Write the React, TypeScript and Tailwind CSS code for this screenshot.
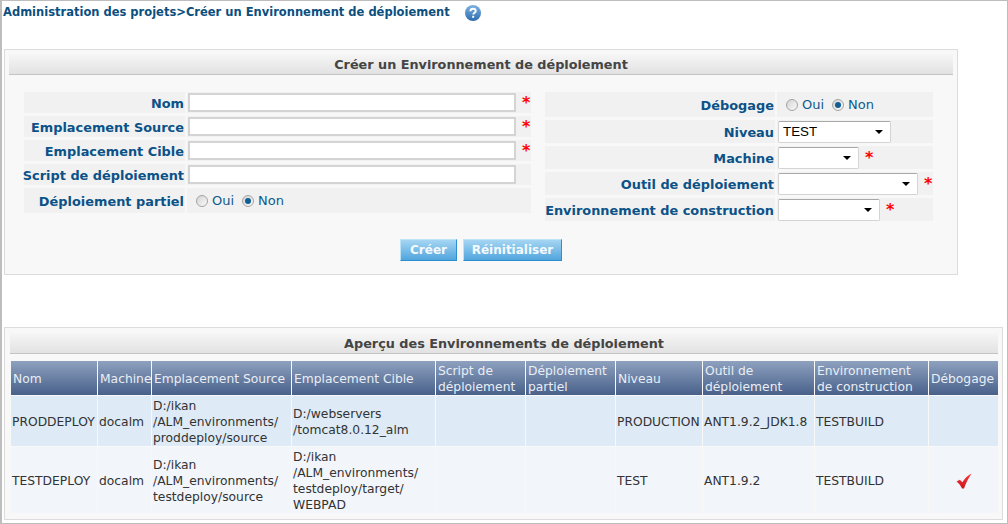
const leftRows = [
  { label: "Nom", required: true },
  { label: "Emplacement Source", required: true },
  { label: "Emplacement Cible", required: true },
  { label: "Script de déploiement", required: false },
];

const rightRows = [
  { label: "Niveau", value: "TEST", width: "w-[113px]", required: false },
  { label: "Machine", value: "", width: "w-[81px]", required: true },
  { label: "Outil de déploiement", value: "", width: "w-[140px]", required: true },
  { label: "Environnement de construction", value: "", width: "w-[102px]", required: true },
];

const columns = [
  { title: ["Nom"], width: "w-[86px]" },
  { title: ["Machine"], width: "w-[53px]" },
  { title: ["Emplacement Source"], width: "w-[139px]" },
  { title: ["Emplacement Cible"], width: "w-[143px]" },
  { title: ["Script de", "déploiement"], width: "w-[89px]" },
  { title: ["Déploiement", "partiel"], width: "w-[89px]" },
  { title: ["Niveau"], width: "w-[86px]" },
  { title: ["Outil de", "déploiement"], width: "w-[111px]" },
  { title: ["Environnement", "de construction"], width: "w-[113px]" },
  { title: ["Débogage"], width: "w-[69px]" },
];

const rows = [
  {
    cells: [
      ["PRODDEPLOY"],
      ["docalm"],
      ["D:/ikan", "/ALM_environments/", "proddeploy/source"],
      ["D:/webservers", "/tomcat8.0.12_alm"],
      [],
      [],
      ["PRODUCTION"],
      ["ANT1.9.2_JDK1.8"],
      ["TESTBUILD"],
      [],
    ],
    bg: "bg-[#deebf6]",
    height: "h-[50px]",
    debug: false,
  },
  {
    cells: [
      ["TESTDEPLOY"],
      ["docalm"],
      ["D:/ikan", "/ALM_environments/", "testdeploy/source"],
      ["D:/ikan", "/ALM_environments/", "testdeploy/target/", "WEBPAD"],
      [],
      [],
      ["TEST"],
      ["ANT1.9.2"],
      ["TESTBUILD"],
      [],
    ],
    bg: "bg-[#f2f6fb]",
    height: "h-[66px]",
    debug: true,
  },
];

function Star() {
  return <span className="mb-[5px] h-[12px] text-[16px] leading-[17px] font-bold text-[#f00]">*</span>;
}

function Radio({ checked }: { checked?: boolean }) {
  return (
    <span className="flex h-[12px] w-[12px] items-center justify-center rounded-full border border-[#a4a4a4] bg-gradient-to-br from-[#d4d4d4] to-[#fafafa]">
      {checked && <span className="h-[6px] w-[6px] rounded-full bg-[#0f5f96]" />}
    </span>
  );
}

function YesNo() {
  return (
    <div className="flex items-center pt-[1px] text-[13px] text-[#0f5a8c]">
      <Radio />
      <span className="ml-[4px]">Oui</span>
      <span className="ml-[8px]">
        <Radio checked />
      </span>
      <span className="ml-[4px]">Non</span>
    </div>
  );
}

function Select({ value, width }: { value: string; width: string }) {
  return (
    <div
      className={`flex h-[22px] items-center justify-between rounded-[2px] border border-[#d4d4d4] border-t-[#a8a8a8] bg-white pt-[1px] pr-[7px] pl-[4px] text-[13.33px] text-black ${width}`}
      style={{ fontFamily: '"Liberation Sans", Arial, sans-serif' }}
    >
      <span>{value}</span>
      <span className="h-0 w-0 border-x-[4px] border-t-[4px] border-x-transparent border-t-black" />
    </div>
  );
}

function HelpIcon() {
  return (
    <svg width="16" height="16" viewBox="0 0 16 16">
      <defs>
        <linearGradient id="help" x1="0" y1="0" x2="0" y2="1">
          <stop offset="0" stopColor="#7fb2e0" />
          <stop offset="1" stopColor="#2b6cb0" />
        </linearGradient>
      </defs>
      <circle cx="8" cy="8" r="8" fill="url(#help)" />
      <path d="M5.4 6.2c0-1.5 1.2-2.5 2.7-2.5s2.6.9 2.6 2.2c0 1.9-2.4 1.8-2.4 3.6" fill="none" stroke="#fff" strokeWidth="1.9" />
      <rect x="7.2" y="10.8" width="2" height="2" fill="#fff" />
    </svg>
  );
}

function Check() {
  return (
    <svg width="16" height="16" viewBox="0 0 16 16">
      <defs>
        <linearGradient id="check" x1="0" y1="0" x2="0" y2="1">
          <stop offset="0" stopColor="#ff3b3b" />
          <stop offset="1" stopColor="#c8141c" />
        </linearGradient>
      </defs>
      <path d="M0.5 8.5 L3.8 6.8 L6.4 9.2 C8.4 5.8 11.5 2.5 15.5 0.5 C13 4.5 10 9.5 8 15.5 L6 15.5 C4.8 12.6 2.8 10.2 0.5 8.5Z" fill="url(#check)" />
    </svg>
  );
}

function PanelTitle({ children }: { children: string }) {
  return (
    <div className="flex h-[21px] items-center justify-center border-b border-[#c4c4c4] bg-gradient-to-b from-[#f6f6f6] to-[#e2e2e2] pt-[2px] text-[12.8px] font-bold text-[#444]">
      {children}
    </div>
  );
}

const labelClass =
  "flex items-center justify-end bg-[#f1f1f1] pt-[2px] pr-[1px] text-[12.9px] font-bold whitespace-nowrap text-[#0b5288]";

export default function App() {
  return (
    <div
      className="flex h-[524px] w-[1008px] flex-col overflow-hidden border-t border-r border-b border-l-2 border-[#bdbdbd] bg-white pl-[2px]"
      style={{ fontFamily: '"DejaVu Sans", Verdana, sans-serif' }}
    >
      {/* Breadcrumb */}
      <div className="-ml-[1px] flex h-[24px] items-center text-[11.5px] font-bold text-[#0b4f80]">
        <span className="w-[462px] whitespace-nowrap">Administration des projets&gt;Créer un Environnement de déploiement</span>
        <HelpIcon />
      </div>

      {/* Create form */}
      <div className="mt-[24px] h-[226px] w-[954px] border border-[#dcdcdc] bg-[#f8f8f8] px-[4px] pt-[4px]">
        <PanelTitle>Créer un Environnement de déploiement</PanelTitle>

        <div className="mt-[17px] flex">
          <div className="ml-[15px] flex w-[507px] flex-col gap-[3px]">
            {leftRows.map((row) => (
              <div key={row.label} className="flex h-[21px] gap-[2px]">
                <div className={`w-[161px] ${labelClass}`}>{row.label}</div>
                <div className="flex flex-1 items-center gap-[6px] bg-[#f1f1f1] pl-[1px]">
                  <div className="h-[19px] w-[328px] border-2 border-[#d4d4d4] bg-white" />
                  {row.required && <Star />}
                </div>
              </div>
            ))}
            <div className="flex h-[25px] gap-[2px]">
              <div className={`w-[161px] ${labelClass}`}>Déploiement partiel</div>
              <div className="flex flex-1 items-center bg-[#f1f1f1] pl-[9px]">
                <YesNo />
              </div>
            </div>
          </div>

          <div className="ml-[14px] flex w-[388px] flex-col gap-[3px]">
            <div className="flex h-[25px] gap-[2px]">
              <div className={`w-[230px] ${labelClass}`}>Débogage</div>
              <div className="flex flex-1 items-center bg-[#f1f1f1] pl-[9px]">
                <YesNo />
              </div>
            </div>
            {rightRows.map((row) => (
              <div key={row.label} className="flex h-[23px] gap-[2px]">
                <div className={`w-[230px] ${labelClass}`}>{row.label}</div>
                <div className="flex flex-1 items-center gap-[6px] bg-[#f1f1f1] pl-[1px]">
                  <Select value={row.value} width={row.width} />
                  {row.required && <Star />}
                </div>
              </div>
            ))}
          </div>
        </div>

        <div className="mt-[18px] flex justify-center gap-[6px]">
          <button className="h-[22px] w-[57px] border border-[#bde3f7] border-r-[#2f8fcc] border-b-[#2f8fcc] bg-gradient-to-b from-[#a5d5f3] to-[#4fa5dd] text-[12px] font-bold text-[#f4faff]">
            Créer
          </button>
          <button className="h-[22px] w-[99px] border border-[#bde3f7] border-r-[#2f8fcc] border-b-[#2f8fcc] bg-gradient-to-b from-[#a5d5f3] to-[#4fa5dd] text-[12px] font-bold text-[#f4faff]">
            Réinitialiser
          </button>
        </div>
      </div>

      {/* Overview table */}
      <div className="mt-[52px] h-[193px] w-[999px] border border-[#dcdcdc] bg-[#f8f8f8] pt-[5px] pr-[4px] pl-[5px]">
        <PanelTitle>Aperçu des Environnements de déploiement</PanelTitle>

        <table className="mt-[6px] w-[989px] table-fixed border-separate border-spacing-[1px] text-[12.3px] text-[#333]">
          <thead>
            <tr>
              {columns.map((col) => (
                <th
                  key={col.title[0]}
                  className={`h-[34px] bg-gradient-to-b from-[#8ea1bf] to-[#49618a] pt-[1px] pl-[2px] text-left align-middle text-[12.3px] leading-[16px] font-normal whitespace-nowrap text-[#e9eef5] ${col.width}`}
                >
                  {col.title.map((line) => (
                    <div key={line}>{line}</div>
                  ))}
                </th>
              ))}
            </tr>
          </thead>
          <tbody>
            {rows.map((row) => (
              <tr key={row.cells[0][0]}>
                {row.cells.map((lines, i) => (
                  <td
                    key={i}
                    className={`pt-[1px] pl-[1px] align-middle leading-[16px] whitespace-nowrap ${row.bg} ${row.height}`}
                  >
                    {lines.map((line) => (
                      <div key={line}>{line}</div>
                    ))}
                    {i === 9 && row.debug && (
                      <div className="flex justify-center">
                        <Check />
                      </div>
                    )}
                  </td>
                ))}
              </tr>
            ))}
          </tbody>
        </table>
      </div>
    </div>
  );
}
